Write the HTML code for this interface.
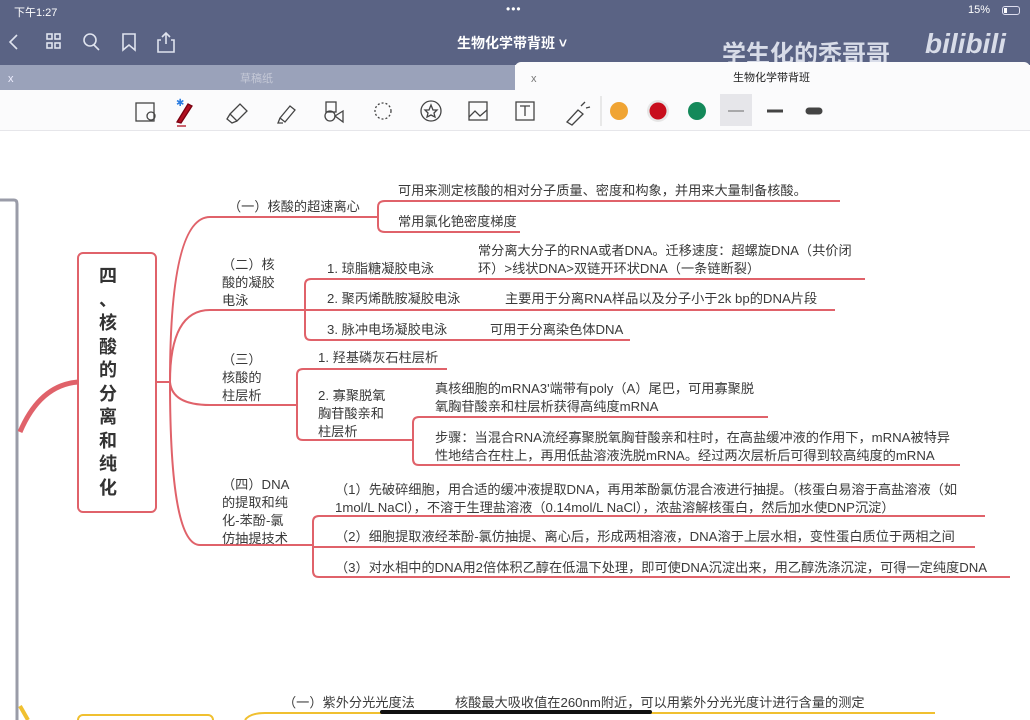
<!DOCTYPE html>
<html><head><meta charset="utf-8"><style>
*{margin:0;padding:0;box-sizing:border-box}
body{width:1030px;height:720px;overflow:hidden;background:#fff;position:relative;font-family:"Liberation Sans","Noto Sans CJK SC",sans-serif;color:#333}
.t{position:absolute;font-size:13.2px;line-height:18px;white-space:nowrap;color:#3a3a3a}
.top{position:absolute;left:0;top:0;width:1030px;height:65px;background:#5a6384}
.w{color:#fff;position:absolute}
</style></head><body>
<div class="top"></div>
<div class="w" style="left:14px;top:4px;font-size:11px">下午1:27</div>
<div class="w" style="left:506px;top:2px;font-size:12px;letter-spacing:1px">•••</div>
<div class="w" style="left:968px;top:4px;font-size:11px">15%</div>
<div style="position:absolute;left:1002px;top:6px;width:18px;height:9px;border:1px solid #dde;border-radius:3px"><div style="width:3px;height:5px;background:#fff;margin:1px"></div></div>
<div class="w" style="left:457px;top:33px;font-size:14px;font-weight:bold">生物化学带背班 ˅</div>
<div class="w" style="left:722px;top:34px;font-size:24px;font-weight:bold;color:#d8dce8">学生化的秃哥哥</div>
<div class="w" style="left:925px;top:28px;font-size:28px;font-weight:bold;color:#d8dce8;font-style:italic">bilibili</div>
<svg style="position:absolute;left:0;top:0" width="200" height="65" fill="none" stroke="#dfe3ee" stroke-width="1.6">
<path d="M17 35 L10 42 L17 49"/>
<rect x="47" y="34" width="5" height="5"/><rect x="55" y="34" width="5" height="5"/><rect x="47" y="43" width="5" height="5"/><rect x="55" y="43" width="5" height="5"/>
<circle cx="90" cy="40" r="6"/><path d="M94 45 L99 50"/>
<path d="M123 34 H135 V50 L129 45 L123 50 Z"/>
<path d="M161 40 H158 V52 H174 V40 H171 M166 44 V33 M162 37 L166 33 L170 37"/>
</svg>
<div style="position:absolute;left:0;top:65px;width:515px;height:25px;background:#9aa2ba"></div>
<div style="position:absolute;left:515px;top:62px;width:515px;height:28px;background:#fbfbfc;border-radius:6px 6px 0 0"></div>
<div class="t" style="left:8px;top:70px;font-size:11px;color:#eef">x</div>
<div class="t" style="left:240px;top:70px;font-size:11px;color:#c4c8d6">草稿纸</div>
<div class="t" style="left:531px;top:70px;font-size:11px;color:#777">x</div>
<div class="t" style="left:733px;top:69px;font-size:11px;color:#222">生物化学带背班</div>
<div style="position:absolute;left:0;top:90px;width:1030px;height:41px;background:#fbfbfc;border-bottom:1px solid #e6e6ea"></div>
<svg style="position:absolute;left:130px;top:92px" width="700" height="38" fill="none" stroke="#444" stroke-width="1.3">
<rect x="6" y="11" width="18" height="18"/><circle cx="21" cy="24" r="4"/>
<path d="M47 30 L58 12 L62 14 L51 31 Z" fill="#b01020" stroke="#7a0010"/><path d="M47 34 H56" stroke="#b01020"/>
<path d="M100 22 L110 12 L117 19 L107 29 Z M100 22 L97 27 L102 31 L107 29"/>
<path d="M150 26 L160 14 L165 18 L155 30 Z M150 26 L148 31 L153 31"/>
<rect x="196" y="10" width="10" height="10"/><circle cx="200" cy="24" r="5"/><path d="M205 24 L213 19 V30 Z"/>
<circle cx="253" cy="19" r="8" stroke-dasharray="2 2"/>
<circle cx="301" cy="19" r="10"/><path d="M301 13 L303 18 L307 18 L304 21 L305 25 L301 23 L297 25 L298 21 L295 18 L299 18 Z"/>
<rect x="339" y="10" width="18" height="18"/><path d="M339 25 L345 19 L350 24 L357 18"/>
<rect x="386" y="10" width="18" height="18"/><path d="M390 14 H400 M395 14 V24"/>
<path d="M437 30 L448 18 L453 22 L442 33 Z M451 14 L455 10 M456 16 L460 15"/>
<path d="M471 4 V34" stroke="#ddd"/>
<circle cx="489" cy="19" r="9" fill="#f0a433" stroke="none"/>
<circle cx="528" cy="19" r="11" fill="#e6e6e6" stroke="none"/><circle cx="528" cy="19" r="8.5" fill="#c80e1c" stroke="none"/>
<circle cx="567" cy="19" r="9" fill="#14895a" stroke="none"/>
<rect x="590" y="2" width="32" height="32" fill="#e6e6ea" stroke="none"/><path d="M598 19 H614" stroke="#888"/>
<path d="M637 19 H653" stroke="#444" stroke-width="3"/>
<path d="M679 19 H689" stroke="#444" stroke-width="7" stroke-linecap="round"/>
</svg>
<div class="t" style="left:176px;top:95px;font-size:10px;color:#2a7ce0">✱</div>
<svg style="position:absolute;left:0;top:0" width="1030" height="720" fill="none" stroke="#e0626a" stroke-width="2">
<path d="M0 200 H14 Q17 200 17 204 V720" stroke="#9a9ca8" stroke-width="3"/>
<path d="M78 382 Q40 385 20 432" stroke-width="5"/>
<rect x="78" y="253" width="78" height="259" rx="5"/>
<path d="M156 382 H170"/>
<path d="M170 382 Q170 217 210 217 H378"/>
<path d="M170 382 Q170 310 210 310 H305"/>
<path d="M170 382 Q172 405 210 405 H297"/>
<path d="M170 382 Q170 545 200 545 H313"/>
<path d="M378 207 Q378 201 385 201 H840 M378 207 V226 Q378 232 385 232 H520"/>
<path d="M305 285 Q305 279 311 279 H865 M305 285 V334 Q305 340 311 340 H630 M305 310 H835"/>
<path d="M297 375 Q297 369 303 369 H447 M297 375 V434 Q297 440 303 440 H413"/>
<path d="M413 423 Q413 417 419 417 H768 M413 423 V459 Q413 465 419 465 H960"/>
<path d="M313 522 Q313 516 319 516 H985 M313 522 V571 Q313 577 319 577 H1010 M313 547 H975"/>
<path d="M245 720 Q250 713 265 713 H935" stroke="#f0c030"/>
<rect x="78" y="715" width="135" height="20" rx="5" stroke="#f0c030"/>
<path d="M20 706 L28 720" stroke="#f0c030" stroke-width="4"/>
<path d="M382 712 H650" stroke="#111" stroke-width="4" stroke-linecap="round"/>
</svg>
<div class="t" style="left:97px;top:265px;font-size:18px;line-height:23.5px;font-weight:bold;color:#333;width:22px;white-space:normal;text-align:center">四<br>、<br>核<br>酸<br>的<br>分<br>离<br>和<br>纯<br>化</div>
<div class="t" style="left:228px;top:198px">（一）核酸的超速离心</div>
<div class="t" style="left:398px;top:182px">可用来测定核酸的相对分子质量、密度和构象，并用来大量制备核酸。</div>
<div class="t" style="left:398px;top:213px">常用氯化铯密度梯度</div>
<div class="t" style="left:222px;top:256px">（二）核<br>酸的凝胶<br>电泳</div>
<div class="t" style="left:327px;top:260px">1. 琼脂糖凝胶电泳</div>
<div class="t" style="left:478px;top:242px">常分离大分子的RNA或者DNA。迁移速度：超螺旋DNA（共价闭<br>环）&gt;线状DNA&gt;双链开环状DNA（一条链断裂）</div>
<div class="t" style="left:327px;top:290px">2. 聚丙烯酰胺凝胶电泳</div>
<div class="t" style="left:505px;top:290px">主要用于分离RNA样品以及分子小于2k bp的DNA片段</div>
<div class="t" style="left:327px;top:321px">3. 脉冲电场凝胶电泳</div>
<div class="t" style="left:490px;top:321px">可用于分离染色体DNA</div>
<div class="t" style="left:222px;top:351px">（三）<br>核酸的<br>柱层析</div>
<div class="t" style="left:318px;top:349px">1. 羟基磷灰石柱层析</div>
<div class="t" style="left:318px;top:387px">2. 寡聚脱氧<br>胸苷酸亲和<br>柱层析</div>
<div class="t" style="left:435px;top:380px">真核细胞的mRNA3'端带有poly（A）尾巴，可用寡聚脱<br>氧胸苷酸亲和柱层析获得高纯度mRNA</div>
<div class="t" style="left:435px;top:429px">步骤：当混合RNA流经寡聚脱氧胸苷酸亲和柱时，在高盐缓冲液的作用下，mRNA被特异<br>性地结合在柱上，再用低盐溶液洗脱mRNA。经过两次层析后可得到较高纯度的mRNA</div>
<div class="t" style="left:222px;top:476px">（四）DNA<br>的提取和纯<br>化-苯酚-氯<br>仿抽提技术</div>
<div class="t" style="left:335px;top:481px">（1）先破碎细胞，用合适的缓冲液提取DNA，再用苯酚氯仿混合液进行抽提。（核蛋白易溶于高盐溶液（如<br>1mol/L NaCl），不溶于生理盐溶液（0.14mol/L NaCl），浓盐溶解核蛋白，然后加水使DNP沉淀）</div>
<div class="t" style="left:335px;top:528px">（2）细胞提取液经苯酚-氯仿抽提、离心后，形成两相溶液，DNA溶于上层水相，变性蛋白质位于两相之间</div>
<div class="t" style="left:335px;top:559px">（3）对水相中的DNA用2倍体积乙醇在低温下处理，即可使DNA沉淀出来，用乙醇洗涤沉淀，可得一定纯度DNA</div>
<div class="t" style="left:283px;top:694px">（一）紫外分光光度法</div>
<div class="t" style="left:455px;top:694px">核酸最大吸收值在260nm附近，可以用紫外分光光度计进行含量的测定</div>
</body></html>
